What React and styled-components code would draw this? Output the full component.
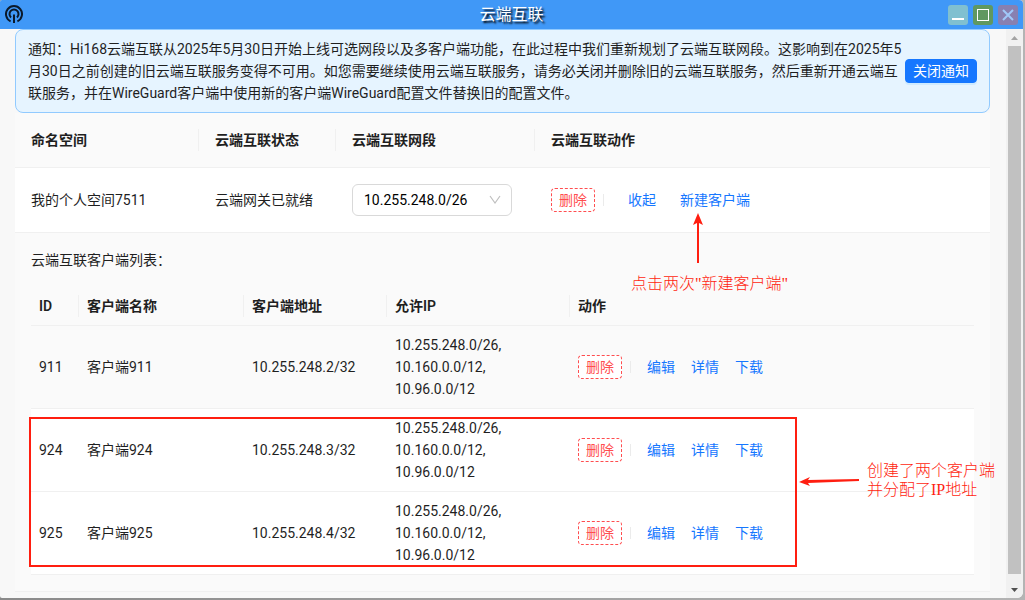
import React from "react";
import styled, { createGlobalStyle, css } from "styled-components";

const GlobalStyle = createGlobalStyle`
  *, *::before, *::after { box-sizing: border-box; }
  body {
    margin: 0;
    font-family: Roboto, "Noto Sans CJK SC", sans-serif;
    font-size: 14px;
    line-height: 22px;
    color: #1f1f1f;
  }
  button, select { font: inherit; margin: 0; cursor: pointer; }
`;

const Desktop = styled.div`
  height: 100vh;
  padding: 0 2px 2px 0;
  background: linear-gradient(to right, #8a8a8a, #b4b4b4);
  overflow: hidden;
`;

const Window = styled.div`
  height: 100%;
  display: flex;
  flex-direction: column;
  background: #f8f8f8;
  border-radius: 2px 4px 6px 2px;
  overflow: hidden;
`;

const TitleBar = styled.header`
  flex: none;
  height: 29px;
  display: grid;
  grid-template-columns: 1fr auto 1fr;
  align-items: center;
  padding: 0 5px;
  background: #4098f7;
`;

const Title = styled.h1`
  margin: 0;
  font-size: 16px;
  line-height: 24px;
  font-weight: 400;
  color: #fff;
  text-shadow: 2px 2px 2px #000;
`;

const AppIcon = styled.svg`
  display: block;
`;

const WindowControls = styled.div`
  display: flex;
  gap: 5px;
  justify-content: flex-end;
`;

const ControlButton = styled.button`
  width: 20px;
  height: 20px;
  padding: 0;
  border: 0;
  border-radius: 3px;
  background: ${(p) => p.$color};
  svg { display: block; }
`;

const Body = styled.div`
  flex: 1;
  min-height: 0;
  display: flex;
`;

const Content = styled.main`
  position: relative;
  flex: 1;
  min-width: 0;
  overflow: hidden;
  padding: 0 16px 0 15px;
`;

const ScrollBar = styled.div`
  flex: none;
  width: 17px;
  padding: 0 2px;
  display: flex;
  flex-direction: column;
  background: #f1f1f1;
`;

const ScrollArrow = styled.svg`
  flex: none;
  display: block;
  width: 13px;
  height: ${(p) => p.$height}px;
`;

const ScrollThumb = styled.div`
  flex: 1;
  background: #c1c1c1;
`;

const Notice = styled.section`
  display: flex;
  align-items: center;
  padding: 8px 12px;
  border: 1px solid #91caff;
  border-radius: 8px;
  background: #e6f4ff;
`;

const NoticeText = styled.p`
  flex: 1;
  min-width: 0;
  margin: 0;
`;

const smallButton = css`
  height: 24px;
  padding: 0 7px;
  border-radius: 4px;
  line-height: 22px;
  white-space: nowrap;
`;

const PrimaryButton = styled.button`
  ${smallButton}
  border: 1px solid #1677ff;
  background: #1677ff;
  color: #fff;
  box-shadow: 0 2px 0 rgba(5, 145, 255, 0.1);
`;

const DangerButton = styled.button`
  ${smallButton}
  border: 1px dashed #ff4d4f;
  background: #fff;
  color: #ff4d4f;
`;

const LinkButton = styled.button`
  ${smallButton}
  border: 1px solid transparent;
  background: transparent;
  color: #1677ff;
`;

const Actions = styled.div`
  display: flex;
  align-items: center;
`;

const Divider = styled.span`
  width: 1px;
  height: 12px;
  margin: 0 8px;
  background: #ebebeb;
`;

const Links = styled.div`
  display: flex;
  gap: ${(p) => (p.$spaced ? "8px" : "0")};
  padding-left: ${(p) => (p.$spaced ? "8px" : "0")};
`;

const Table = styled.table`
  width: 100%;
  table-layout: fixed;
  border-collapse: separate;
  border-spacing: 0;
`;

const Col = styled.col`
  width: ${(p) => (p.$width ? `${p.$width}px` : "auto")};
`;

const HeadCell = styled.th`
  position: relative;
  padding: ${(p) => (p.$compact ? "8px" : "16px")};
  border-bottom: 1px solid #f0f0f0;
  background: #fafafa;
  text-align: left;
  font-weight: 600;

  &:not(:last-child)::after {
    content: "";
    position: absolute;
    top: calc(50% - 11px);
    right: 0;
    width: 1px;
    height: 22px;
    background: #f0f0f0;
  }
`;

const Cell = styled.td`
  padding: ${(p) => (p.$compact ? "8px" : "16px")};
  border-bottom: 1px solid #f0f0f0;
  background: ${(p) => (p.$muted ? "#fafafa" : "#fff")};
`;

const ListTitle = styled.p`
  margin: 0 0 16px;
`;

const AddressLine = styled.div`
  white-space: nowrap;
`;

const SelectBox = styled.div`
  position: relative;
  width: 160px;

  svg {
    position: absolute;
    top: 10px;
    right: 11px;
    pointer-events: none;
  }
`;

const Select = styled.select`
  display: block;
  width: 100%;
  height: 32px;
  padding: 0 30px 0 11px;
  border: 1px solid #d9d9d9;
  border-radius: 6px;
  background: #fff;
  color: #000;
  appearance: none;
`;

const MarkBox = styled.div`
  position: absolute;
  left: 29px;
  top: 388px;
  width: 768px;
  height: 150px;
  border: 2px solid #ff1e10;
  pointer-events: none;
`;

const MarkText = styled.div`
  position: absolute;
  left: ${(p) => p.$left}px;
  top: ${(p) => p.$top}px;
  font-family: "Liberation Serif", "Noto Sans CJK SC", serif;
  font-size: 16px;
  line-height: 19px;
  font-weight: 300;
  white-space: nowrap;
  color: #ff1e10;
`;

const MarkArrow = styled.svg`
  position: absolute;
  left: ${(p) => p.$left}px;
  top: ${(p) => p.$top}px;
  pointer-events: none;
`;

const clients = [
  { id: "911", address: "10.255.248.2/32", muted: true },
  { id: "924", address: "10.255.248.3/32" },
  { id: "925", address: "10.255.248.4/32" },
];

const allowed = ["10.255.248.0/26,", "10.160.0.0/12,", "10.96.0.0/12"];

function ClientTable() {
  return (
    <Table>
      <colgroup>
        <Col $width={48} />
        <Col $width={165} />
        <Col $width={143} />
        <Col $width={183} />
        <Col />
      </colgroup>
      <thead>
        <tr>
          {["ID", "客户端名称", "客户端地址", "允许IP", "动作"].map((name) => (
            <HeadCell key={name} $compact>{name}</HeadCell>
          ))}
        </tr>
      </thead>
      <tbody>
        {clients.map(({ id, address, muted }) => (
          <tr key={id}>
            <Cell $compact $muted={muted}>{id}</Cell>
            <Cell $compact $muted={muted}>客户端{id}</Cell>
            <Cell $compact $muted={muted}>{address}</Cell>
            <Cell $compact $muted={muted}>
              {allowed.map((ip) => <AddressLine key={ip}>{ip}</AddressLine>)}
            </Cell>
            <Cell $compact $muted={muted}>
              <Actions>
                <DangerButton type="button">删除</DangerButton>
                <Divider />
                <Links>
                  <LinkButton type="button">编辑</LinkButton>
                  <LinkButton type="button">详情</LinkButton>
                  <LinkButton type="button">下载</LinkButton>
                </Links>
              </Actions>
            </Cell>
          </tr>
        ))}
      </tbody>
    </Table>
  );
}

export default function App() {
  return (
    <Desktop lang="zh-CN">
      <GlobalStyle />
      <Window>
        <TitleBar>
          <AppIcon width="18" height="20" viewBox="0 0 18 20" fill="none" stroke="#0b1a2c" strokeWidth="2">
            <path d="M5.6 16.3A8 8 0 1 1 12.4 16.3" />
            <path d="M6 12.4A4.5 4.5 0 1 1 12 12.4" />
            <path d="M9 9.5V18" />
          </AppIcon>
          <Title>云端互联</Title>
          <WindowControls>
            <ControlButton type="button" aria-label="最小化" $color="#80c0d0">
              <svg width="20" height="20"><path d="M4 14H16" stroke="#fff" strokeWidth="2" /></svg>
            </ControlButton>
            <ControlButton type="button" aria-label="最大化" $color="#609860">
              <svg width="20" height="20"><rect x="4.5" y="4.5" width="11" height="11" fill="none" stroke="#fff" /></svg>
            </ControlButton>
            <ControlButton type="button" aria-label="关闭" $color="#8880b0">
              <svg width="20" height="20"><path d="M5 5L15 15M15 5L5 15" stroke="#a0c8f8" strokeWidth="2" /></svg>
            </ControlButton>
          </WindowControls>
        </TitleBar>
        <Body>
          <Content>
            <Notice>
              <NoticeText>
                通知：Hi168云端互联从2025年5月30日开始上线可选网段以及多客户端功能，在此过程中我们重新规划了云端互联网段。这影响到在2025年5月30日之前创建的旧云端互联服务变得不可用。如您需要继续使用云端互联服务，请务必关闭并删除旧的云端互联服务，然后重新开通云端互联服务，并在WireGuard客户端中使用新的客户端WireGuard配置文件替换旧的配置文件。
              </NoticeText>
              <PrimaryButton type="button">关闭通知</PrimaryButton>
            </Notice>
            <Table>
              <colgroup>
                <Col $width={184} />
                <Col $width={137} />
                <Col $width={199} />
                <Col />
              </colgroup>
              <thead>
                <tr>
                  {["命名空间", "云端互联状态", "云端互联网段", "云端互联动作"].map((name) => (
                    <HeadCell key={name}>{name}</HeadCell>
                  ))}
                </tr>
              </thead>
              <tbody>
                <tr>
                  <Cell>我的个人空间7511</Cell>
                  <Cell>云端网关已就绪</Cell>
                  <Cell>
                    <SelectBox>
                      <Select aria-label="云端互联网段" defaultValue="10.255.248.0/26">
                        <option>10.255.248.0/26</option>
                      </Select>
                      <svg width="12" height="12" viewBox="0 0 12 12" fill="none" stroke="#bfbfbf" strokeWidth="1.2">
                        <path d="M1 2L6 9L11 2" />
                      </svg>
                    </SelectBox>
                  </Cell>
                  <Cell>
                    <Actions>
                      <DangerButton type="button">删除</DangerButton>
                      <Divider />
                      <Links $spaced>
                        <LinkButton type="button">收起</LinkButton>
                        <LinkButton type="button">新建客户端</LinkButton>
                      </Links>
                    </Actions>
                  </Cell>
                </tr>
                <tr>
                  <Cell colSpan={4} $muted>
                    <ListTitle>云端互联客户端列表：</ListTitle>
                    <ClientTable />
                  </Cell>
                </tr>
              </tbody>
            </Table>
            <MarkBox />
            <MarkArrow $left={693} $top={184} width="10" height="50">
              <path d="M5 0L10 12L6 10L6 50H4L4 10L0 12Z" fill="#ff1e10" />
            </MarkArrow>
            <MarkText $left={631} $top={245}>点击两次"新建客户端"</MarkText>
            <MarkArrow $left={799} $top={448} width="60" height="10">
              <path d="M0 5L11 0L9 3L60 2V4L9 6L11 9Z" fill="#ff1e10" />
            </MarkArrow>
            <MarkText $left={867} $top={432}>
              创建了两个客户端
              <br />
              并分配了IP地址
            </MarkText>
          </Content>
          <ScrollBar aria-hidden="true">
            <ScrollArrow $height={17} viewBox="0 0 13 17"><path d="M3 11L6.5 7L10 11Z" fill="#a3a3a3" /></ScrollArrow>
            <ScrollThumb />
            <ScrollArrow $height={24} viewBox="0 0 13 24"><path d="M3 14L6.5 18L10 14Z" fill="#505050" /></ScrollArrow>
          </ScrollBar>
        </Body>
      </Window>
    </Desktop>
  );
}
